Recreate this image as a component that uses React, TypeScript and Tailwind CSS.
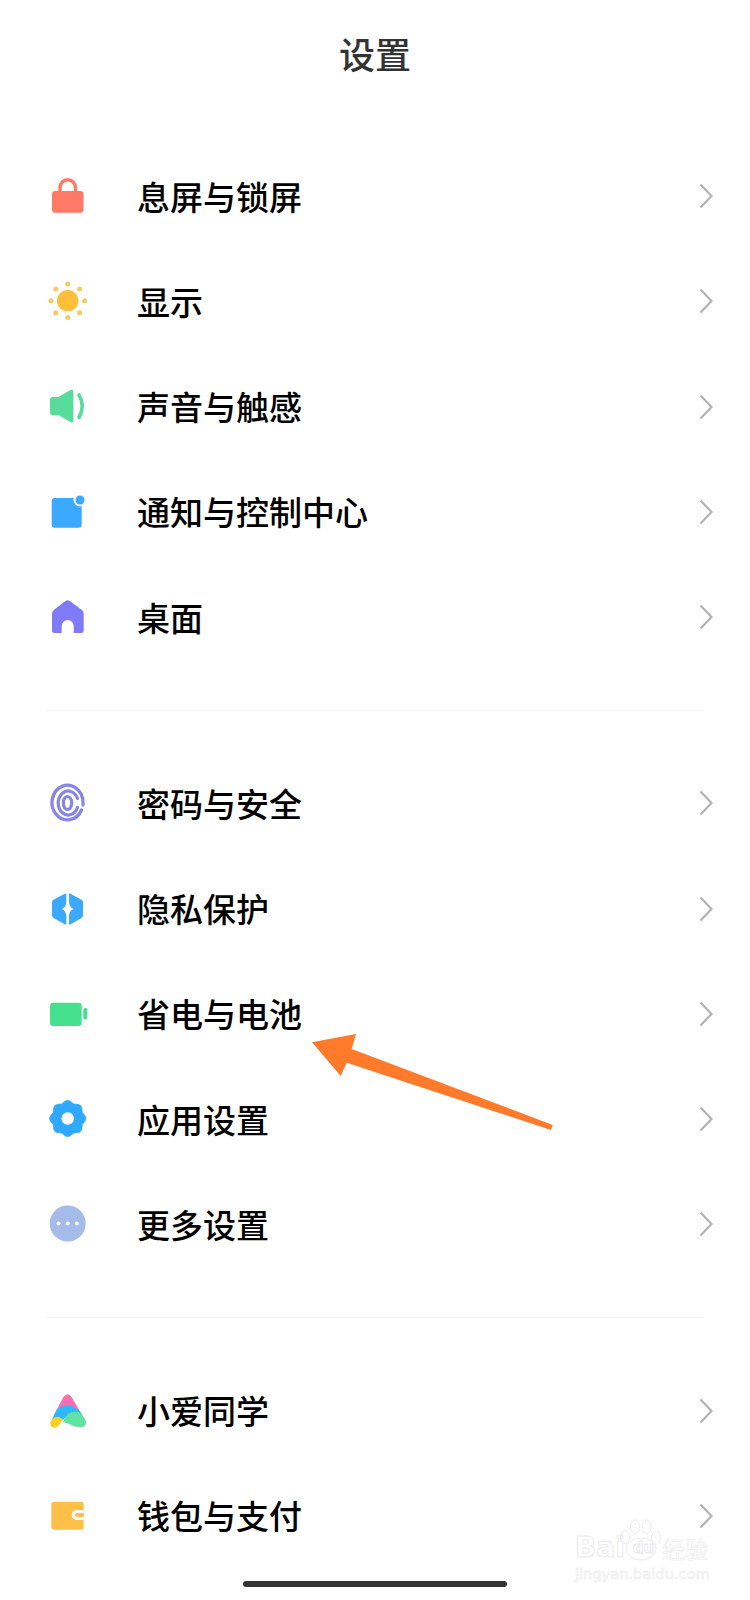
const Svg = ({ children }: { children: React.ReactNode }) => (
  <svg width="40" height="40" viewBox="0 0 40 40" className="shrink-0">{children}</svg>
);

const Lock = () => (
  <Svg>
    <path d="M12 17V11.500a7.700 7.700 0 0 1 15.400 0V17" fill="none" stroke="#ff7a66" strokeWidth="3.400" />
    <rect x="4" y="15" width="31.400" height="21.700" rx="3" fill="#ff7a66" />
  </Svg>
);

const Sun = () => (
  <Svg>
    {[0, 45, 90, 135, 180, 225, 270, 315].map((a) => (
      <circle key={a} cx={19.700 + 16.800 * Math.cos((a * Math.PI) / 180)} cy={19.800 + 16.800 * Math.sin((a * Math.PI) / 180)} r="2.500" fill="#fbc95f" />
    ))}
    <circle cx="19.700" cy="19.800" r="10.700" fill="#fdbe3a" />
  </Svg>
);

const Speaker = () => (
  <Svg>
    <path d="M4.500 10H10.500L22 3.200q3.400-1.800 3.400 1.800V33q0 3.600-3.400 1.800L10.500 28H4.500q-2.500 0-2.500-2.500V12.500q0-2.500 2.500-2.500z" fill="#56dc9b" />
    <path d="M31 8q6.500 11 0 22.500" fill="none" stroke="#56dc9b" strokeWidth="3.600" strokeLinecap="round" />
  </Svg>
);

const Notice = () => (
  <Svg>
    <rect x="3.700" y="6" width="30" height="29.700" rx="3" fill="#3aa9ff" />
    <circle cx="32" cy="8" r="6.500" fill="#fff" />
    <circle cx="32" cy="8" r="4.500" fill="#3aa9ff" />
  </Svg>
);

const Home = () => (
  <Svg>
    <path d="M17.500 4q2.200-1.600 4.400 0L33.600 12.800q2.100 1.500 2.100 3.900V33.500q0 2.500-2.500 2.500H25.700V29a6 6 0 0 0-12 0V36H6.500Q4 36 4 33.500V16.700q0-2.400 2.100-3.900z" fill="#7f7bf7" />
  </Svg>
);

const Finger = () => (
  <Svg>
    <path d="M33.500 27A15.500 17.300 0 1 1 35 20V22" fill="none" stroke="#8885e6" strokeWidth="3.300" strokeLinecap="round" />
    <path d="M29.500 15.500A10 12 0 1 0 29.500 24.500" fill="none" stroke="#8885e6" strokeWidth="3.200" strokeLinecap="round" />
    <ellipse cx="19.500" cy="20" rx="4.200" ry="6.500" fill="none" stroke="#8885e6" strokeWidth="3.200" />
  </Svg>
);

const Shield = () => (
  <Svg>
    <path d="M18.300 4.400V13q-.6 5.500-4.500 7 3.900 1.500 4.500 7v8.600q-.8.100-1.500-.3L5.500 29q-1.500-.9-1.500-2.700V13.400q0-1.800 1.500-2.700l11.300-6q.7-.4 1.500-.3z" fill="#3aa9ff" />
    <path d="M21 4.400V13q.6 5.500 4.500 7-3.900 1.500-4.500 7v8.600q.8.100 1.500-.3L33.500 29q1.500-.9 1.500-2.700V13.400q0-1.800-1.500-2.700l-11-6q-.7-.4-1.500-.3z" fill="#3aa9ff" />
  </Svg>
);

const Battery = () => (
  <Svg>
    <rect x="2" y="8.700" width="31.700" height="23.300" rx="3" fill="#45e08d" />
    <rect x="35.300" y="14" width="4" height="11.500" rx="1.500" fill="#45e08d" />
  </Svg>
);

const gearPath = (() => {
  const cx = 19.700;
  const cy = 19.500;
  const pt = (deg: number, r: number) => {
    const t = (deg * Math.PI) / 180;
    return `${(cx + r * Math.cos(t)).toFixed(2)} ${(cy + r * Math.sin(t)).toFixed(2)}`;
  };
  let d = `M${pt(-22.500, 15.800)}`;
  for (let i = 0; i < 8; i++) {
    const lobe = i * 45;
    d += `L${pt(lobe - 9, 17.500)}Q${pt(lobe, 19.200)} ${pt(lobe + 9, 17.500)}L${pt(lobe + 22.500, 15.800)}`;
  }
  return d + "Z";
})();

const Gear = () => (
  <Svg>
    <path d={gearPath} fill="#2fa8ff" stroke="#2fa8ff" strokeWidth="0.600" strokeLinejoin="round" />
    <circle cx="19.700" cy="19.500" r="6.200" fill="#fff" />
  </Svg>
);

const More = () => (
  <Svg>
    <circle cx="19.700" cy="19.500" r="18" fill="#a5bbea" />
    <circle cx="10.500" cy="19.500" r="2" fill="#fff" />
    <circle cx="19.700" cy="19.500" r="2" fill="#fff" />
    <circle cx="28.900" cy="19.500" r="2" fill="#fff" />
  </Svg>
);

const XiaoAi = () => (
  <Svg>
    <path d="M15.500 6Q19.500 .5 23.500 6L34 24H6Z" fill="#f76fb0" />
    <path d="M2.500 31Q4.500 26 9 26Q13 26 15 29Q12.500 31 11 34Q8.500 37.500 5 36.500Q1.500 35 2.500 31Z" fill="#ffd11f" />
    <path d="M4 28.500L8.500 19Q12 14.500 19 14.500Q28 14.500 34 23L24 24Q18 25 15 29Q12.500 26 9 26Q6 26 4 28.500Z" fill="#2db8ff" />
    <path d="M15 31Q18.500 20.500 27 20.500Q34.500 20.500 38 30.500Q38.500 36 32.500 36Q28 36 24.500 34.500Q20 32 15 31Z" fill="#5ee3a1" />
  </Svg>
);

const Wallet = () => (
  <Svg>
    <rect x="3.300" y="5.700" width="32.400" height="28" rx="3" fill="#ffc04a" />
    <path d="M35.700 14H28.700a5 5 0 0 0 0 10H35.700z" fill="#fff" />
    <path d="M35.700 17H29a2 2 0 0 0 0 4H35.700z" fill="#ffc04a" />
  </Svg>
);

const Row = ({ icon, label }: { icon: React.ReactNode; label: string }) => (
  <div className="flex h-[105.25px] items-center pl-12 pr-[37px]">
    {icon}
    <span className="ml-[49px] flex-1 text-[33px] font-medium leading-none text-black">{label}</span>
    <svg width="14" height="26" viewBox="0 0 14 26" className="shrink-0">
      <path d="M1.500 1.500L12.500 13L1.500 24.500" fill="none" stroke="#b3b3b3" strokeWidth="2.200" />
    </svg>
  </div>
);

const Divider = () => <div className="mx-[46px] my-10 h-px bg-[#f6f6f6]" />;

export default function App() {
  return (
    <div className="relative h-[1600px] w-[750px] overflow-hidden bg-white font-['Noto_Sans_CJK_SC','Noto_Sans',sans-serif]">
      <div className="flex h-[143.500px] justify-center pt-[33px] text-[36px] font-medium leading-[40px] text-[#333333]">设置</div>

      <Row icon={<Lock />} label="息屏与锁屏" />
      <Row icon={<Sun />} label="显示" />
      <Row icon={<Speaker />} label="声音与触感" />
      <Row icon={<Notice />} label="通知与控制中心" />
      <Row icon={<Home />} label="桌面" />
      <Divider />
      <Row icon={<Finger />} label="密码与安全" />
      <Row icon={<Shield />} label="隐私保护" />
      <Row icon={<Battery />} label="省电与电池" />
      <Row icon={<Gear />} label="应用设置" />
      <Row icon={<More />} label="更多设置" />
      <Divider />
      <Row icon={<XiaoAi />} label="小爱同学" />
      <Row icon={<Wallet />} label="钱包与支付" />

      {/* annotation arrow */}
      <svg className="absolute left-[300px] top-[1025px]" width="260" height="115" viewBox="300 1025 260 115">
        <polygon points="312,1042.300 356,1034 351.700,1049 552.700,1125 551,1130 346.700,1062.700 340.700,1076" fill="#ff7a2b" />
      </svg>

      {/* watermark */}
      <div className="absolute left-[575px] top-[1517px] w-[140px]">
        <svg width="46" height="46" viewBox="0 0 46 46" className="absolute left-[45px] top-[1px]">
          <g fill="#fff" stroke="#ebebeb" strokeWidth="1">
            <ellipse cx="5" cy="19" rx="4.500" ry="6.500" />
            <ellipse cx="15" cy="9" rx="4.500" ry="7" />
            <ellipse cx="26.700" cy="9" rx="4.500" ry="7" />
            <ellipse cx="36" cy="19.700" rx="4.500" ry="6.500" />
            <ellipse cx="21" cy="31" rx="15" ry="11" />
          </g>
        </svg>
        <div className="relative mt-[19px] flex h-[24px] items-center font-['DejaVu_Sans',sans-serif] text-[28px] font-bold leading-none text-transparent [-webkit-text-stroke:1px_#ebebeb]">
          <span className="w-[50px]">Bai</span>
          <span className="w-[37px] text-center text-[15px] [-webkit-text-stroke:0.8px_#e6e6e6]">du</span>
          <span className="font-['Noto_Sans_CJK_SC',sans-serif] text-[23px] font-normal [-webkit-text-stroke:0.6px_#ebebeb]">经验</span>
        </div>
        <div className="mt-[4px] font-['DejaVu_Sans',sans-serif] text-[14.600px] leading-[20px] text-transparent [-webkit-text-stroke:0.6px_#ebebeb]">jingyan.baidu.com</div>
      </div>

      {/* gesture bar */}
      <div className="absolute bottom-[13px] left-[243px] h-[6px] w-[264px] rounded-full bg-[#333333]" />
    </div>
  );
}
